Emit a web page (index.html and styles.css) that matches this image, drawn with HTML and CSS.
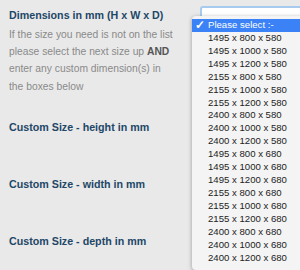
FILE: index.html
```html
<!DOCTYPE html>
<html lang="en">
<head>
    <meta charset="UTF-8">
    <meta name="viewport" content="width=device-width, initial-scale=1.0">
    <title>Dimensions</title>
    <link rel="stylesheet" href="styles.css">
</head>
<body>
<div class="page">
    <div class="row">
        <div class="left">
            <h3 class="title">Dimensions in mm (H x W x D)</h3>
            <p class="hint">If the size you need is not on the list<br>please select the next size up <strong>AND</strong><br>enter any custom dimension(s) in<br>the boxes below</p>
        </div>
        <div class="select-wrap">
            <div class="select-box"></div>
            <ul class="menu">
                <li class="selected"><span class="check">&#10003;</span>Please select :-</li>
                <li>1495 x 800 x 580</li>
                <li>1495 x 1000 x 580</li>
                <li>1495 x 1200 x 580</li>
                <li>2155 x 800 x 580</li>
                <li>2155 x 1000 x 580</li>
                <li>2155 x 1200 x 580</li>
                <li>2400 x 800 x 580</li>
                <li>2400 x 1000 x 580</li>
                <li>2400 x 1200 x 580</li>
                <li>1495 x 800 x 680</li>
                <li>1495 x 1000 x 680</li>
                <li>1495 x 1200 x 680</li>
                <li>2155 x 800 x 680</li>
                <li>2155 x 1000 x 680</li>
                <li>2155 x 1200 x 680</li>
                <li>2400 x 800 x 680</li>
                <li>2400 x 1000 x 680</li>
                <li>2400 x 1200 x 680</li>
            </ul>
        </div>
    </div>
    <h3 class="title custom">Custom Size - height in mm</h3>
    <h3 class="title custom">Custom Size - width in mm</h3>
    <h3 class="title custom">Custom Size - depth in mm</h3>
</div>
</body>
</html>
```

FILE: styles.css
```css
body {
    margin: 0;
    min-height: 270px;
    background: #e9e9e9;
    font-family: "Liberation Sans", Arial, sans-serif;
}
.page {
    padding: 8px 0 0 9px;
}
.row {
    display: flex;
}
.left {
    width: 185px;
    flex: none;
}
.title {
    margin: 0;
    font-size: 10.7px;
    font-weight: bold;
    color: #1d4767;
    line-height: 14px;
}
.hint {
    margin: 4px 0 0;
    font-size: 10.3px;
    line-height: 17.2px;
    color: #8a8a8a;
    white-space: nowrap;
}
.hint strong {
    color: #555;
}
.custom {
    margin-top: 25px;
}
.custom + .custom {
    margin-top: 43px;
}
.select-wrap {
    position: relative;
    flex: 1;
    margin-left: 6px;
}
.select-box {
    height: 14px;
    margin-top: -2px;
    background: #fff;
    border: 2px solid #a7cbee;
    border-right: none;
    border-radius: 3px 0 0 3px;
}
.menu {
    position: absolute;
    top: 8px;
    left: -8px;
    width: 120px;
    margin: 0;
    padding: 3px 0 5px;
    list-style: none;
    background: #f4f4f4;
    border-radius: 4px;
    box-shadow: 0 1px 4px rgba(0, 0, 0, 0.35);
}
.menu li {
    height: 12.93px;
    line-height: 12.93px;
    padding-left: 16px;
    font-size: 9.6px;
    color: #222;
    white-space: nowrap;
}
.menu li.selected {
    background: #3b82f6;
    color: #fff;
    position: relative;
}
.check {
    position: absolute;
    left: 3px;
    font-size: 12px;
    font-weight: bold;
}
```
